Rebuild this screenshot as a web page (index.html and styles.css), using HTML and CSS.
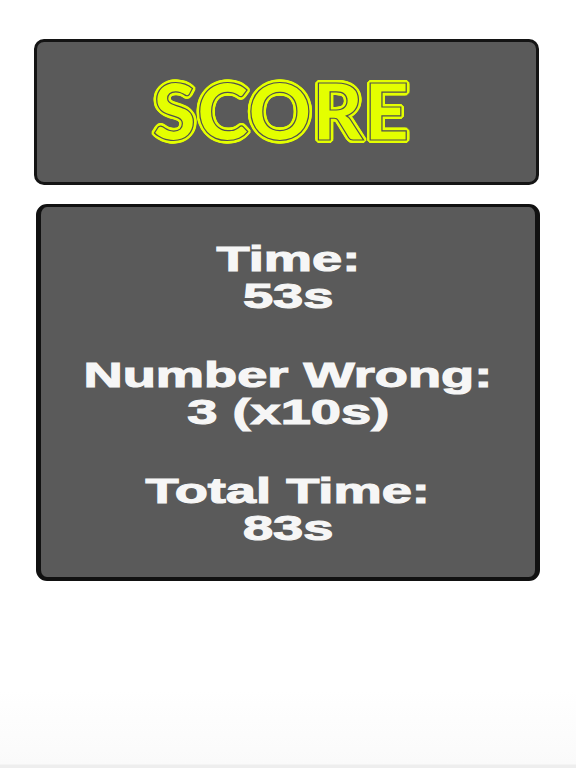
FILE: index.html
```html
<!DOCTYPE html>
<html>
<head>
<meta charset="utf-8">
<link rel="stylesheet" href="styles.css">
</head>
<body>
<main class="page">
  <section class="score-box">
    <h1 class="score-title">SCORE</h1>
  </section>
  <section class="result-box">
    <div class="group">
      <p class="line"><span class="stretch">Time:</span></p>
      <p class="line"><span class="stretch">53s</span></p>
    </div>
    <div class="group">
      <p class="line"><span class="stretch">Number Wrong:</span></p>
      <p class="line"><span class="stretch">3 (x10s)</span></p>
    </div>
    <div class="group">
      <p class="line"><span class="stretch">Total Time:</span></p>
      <p class="line"><span class="stretch">83s</span></p>
    </div>
  </section>
</main>
</body>
</html>
```

FILE: styles.css
```css
html, body {
  margin: 0;
  padding: 0;
}
body {
  width: 576px;
  height: 768px;
  overflow: hidden;
  background: linear-gradient(to bottom, #ffffff 0, #ffffff 690px, #fafafa 764px, #eeeeee 765px, #eeeeee 768px);
  font-family: "Liberation Sans", Arial, sans-serif;
}
.page {
  display: flex;
  flex-direction: column;
  gap: 19px;
  padding-top: 39px;
}
.score-box {
  box-sizing: border-box;
  margin-left: 34px;
  width: 505px;
  height: 146px;
  background: #5a5a5a;
  border: 3px solid #141414;
  border-radius: 10px;
  display: flex;
  align-items: center;
  justify-content: center;
  padding-right: 10px;
  padding-bottom: 4px;
}
.score-title {
  margin: 0;
  font-family: Lato, "DejaVu Sans", sans-serif;
  font-weight: 900;
  font-size: 78px;
  line-height: 1;
  color: #e4ff00;
  -webkit-text-stroke: 1.2px #505050;
  text-shadow:
    3px 0 0 #e4ff00, -3px 0 0 #e4ff00, 0 3px 0 #e4ff00, 0 -3px 0 #e4ff00,
    2px 2px 0 #e4ff00, -2px 2px 0 #e4ff00, 2px -2px 0 #e4ff00, -2px -2px 0 #e4ff00,
    3px 1px 0 #e4ff00, -3px 1px 0 #e4ff00, 3px -1px 0 #e4ff00, -3px -1px 0 #e4ff00,
    1px 3px 0 #e4ff00, -1px 3px 0 #e4ff00, 1px -3px 0 #e4ff00, -1px -3px 0 #e4ff00;
  letter-spacing: 1px;
}
.result-box {
  box-sizing: border-box;
  margin-left: 36px;
  width: 504px;
  height: 377px;
  background: #5a5a5a;
  border-style: solid;
  border-color: #111111;
  border-width: 3px 5px 4px 5px;
  border-radius: 11px;
  padding-top: 33px;
  display: flex;
  flex-direction: column;
  gap: 42px;
  color: #f6f6f6;
}
.group {
  display: flex;
  flex-direction: column;
  align-items: center;
}
.line {
  margin: 0;
  font-size: 35px;
  line-height: 37px;
  font-weight: bold;
  white-space: nowrap;
  -webkit-text-stroke: 1.1px #f6f6f6;
}
.stretch {
  display: inline-block;
  transform: scaleX(1.55);
}
```
